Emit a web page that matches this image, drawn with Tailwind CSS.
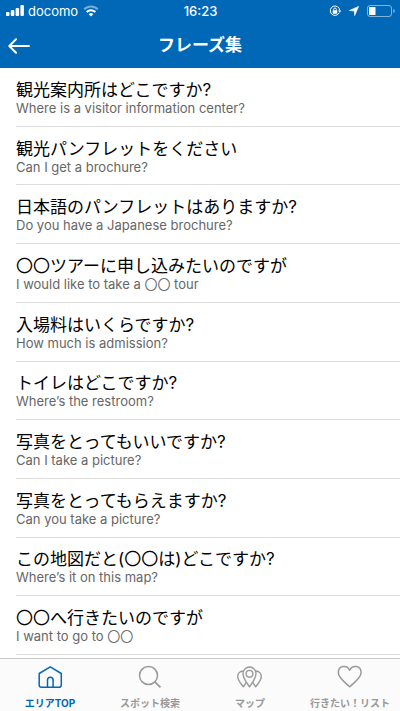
<!DOCTYPE html>
<html lang="ja">
<head>
<meta charset="utf-8">
<meta name="viewport" content="width=device-width, initial-scale=1">
<title>フレーズ集</title>
<script src="https://cdn.jsdelivr.net/npm/@tailwindcss/browser@4"></script>
</head>
<body class="flex h-screen flex-col bg-white font-['Inter','Noto_Sans_CJK_JP',sans-serif] text-black">
  <header class="shrink-0 bg-[#0068b7] text-white">
    <div class="grid h-[22px] grid-cols-3 items-center pr-[5px] pl-[6px] text-[13px] leading-[22px]">
      <div class="flex items-center gap-1">
        <svg class="h-3 w-[18px]" viewBox="0 0 18 12" fill="currentColor" aria-hidden="true">
          <rect x="0" y="7" width="3.500" height="4" rx="1"/><rect x="4.800" y="5" width="3.500" height="6" rx="1"/><rect x="9.600" y="3" width="3.500" height="8" rx="1"/><rect x="14.400" y="0" width="3.500" height="11" rx="1"/>
        </svg>
        <span>docomo</span>
        <svg class="ml-px h-3 w-4" viewBox="0 0 16 12" fill="none" stroke="currentColor" stroke-width="2" aria-hidden="true">
          <path d="M1.200 4.300a9.600 9.600 0 0 1 13.600 0" opacity=".45"/><path d="M3.700 7a6 6 0 0 1 8.600 0"/><path d="M5.700 9.200a3.200 3.200 0 0 1 4.600 0L8 11.500z" fill="currentColor" stroke="none"/>
        </svg>
      </div>
      <time class="text-center font-medium">16:23</time>
      <div class="flex items-center justify-end gap-2">
        <svg class="h-3 w-3" viewBox="0 0 12 12" fill="none" stroke="currentColor" aria-hidden="true">
          <path d="M10.300 7.600A4.700 4.700 0 1 1 10.700 5.500"/><path d="M9 5.500h3.400L10.700 7.500z" fill="currentColor" stroke="none"/><rect x="3.700" y="5.300" width="4.600" height="3.400" rx=".4" fill="currentColor" stroke="none"/><path d="M4.700 5.500V4.300a1.300 1.300 0 0 1 2.600 0v1.200" stroke-width=".9"/>
        </svg>
        <svg class="h-[10px] w-[10px]" viewBox="0 0 10 10" fill="currentColor" stroke="currentColor" stroke-width=".6" stroke-linejoin="round" aria-hidden="true"><path d="M9.600.4 5.700 9.600 5.200 4.900.4 4.500z"/></svg>
        <svg class="h-3 w-[28px]" viewBox="0 0 28 12" fill="none" aria-hidden="true">
          <rect x=".5" y=".5" width="24" height="11" rx="2.500" stroke="#fff" stroke-opacity=".5"/><rect x="2" y="2" width="6.500" height="8" rx=".6" fill="#fff"/><path d="M26.300 4v4c1-.3 1.500-1.100 1.500-2s-.5-1.700-1.500-2z" fill="#fff" fill-opacity=".5"/>
        </svg>
      </div>
    </div>
    <div class="grid h-[46px] grid-cols-[48px_1fr_48px] items-center">
      <button type="button" aria-label="戻る" class="flex h-full items-center pt-px pl-2">
        <svg class="h-4 w-[23px]" viewBox="0 0 23 16" fill="none" stroke="currentColor" stroke-width="2" stroke-linecap="round" stroke-linejoin="round" aria-hidden="true"><path d="M21 8H1.500M8 1.300 1.300 8 8 14.700"/></svg>
      </button>
      <h1 class="text-center text-[17px] leading-6 font-bold">フレーズ集</h1>
    </div>
  </header>

  <main class="min-h-0 flex-1 overflow-hidden pb-[3px] pl-4">
    <ul class="grid h-full auto-rows-fr">
      <li class="flex flex-col justify-center border-b border-[#dcdcdc] pt-1"><p class="text-[17px] leading-5">観光案内所はどこですか?</p><p class="pb-[2px] text-[13px] leading-4 text-[#666]">Where is a visitor information center?</p></li>
      <li class="flex flex-col justify-center border-b border-[#dcdcdc] pt-1"><p class="text-[17px] leading-5">観光パンフレットをください</p><p class="pb-[2px] text-[13px] leading-4 text-[#666]">Can I get a brochure?</p></li>
      <li class="flex flex-col justify-center border-b border-[#dcdcdc] pt-1"><p class="text-[17px] leading-5">日本語のパンフレットはありますか?</p><p class="pb-[2px] text-[13px] leading-4 text-[#666]">Do you have a Japanese brochure?</p></li>
      <li class="flex flex-col justify-center border-b border-[#dcdcdc] pt-1"><p class="text-[17px] leading-5">〇〇ツアーに申し込みたいのですが</p><p class="pb-[2px] text-[13px] leading-4 text-[#666]">I would like to take a 〇〇 tour</p></li>
      <li class="flex flex-col justify-center border-b border-[#dcdcdc] pt-1"><p class="text-[17px] leading-5">入場料はいくらですか?</p><p class="pb-[2px] text-[13px] leading-4 text-[#666]">How much is admission?</p></li>
      <li class="flex flex-col justify-center border-b border-[#dcdcdc] pt-1"><p class="text-[17px] leading-5">トイレはどこですか?</p><p class="pb-[2px] text-[13px] leading-4 text-[#666]">Where’s the restroom?</p></li>
      <li class="flex flex-col justify-center border-b border-[#dcdcdc] pt-1"><p class="text-[17px] leading-5">写真をとってもいいですか?</p><p class="pb-[2px] text-[13px] leading-4 text-[#666]">Can I take a picture?</p></li>
      <li class="flex flex-col justify-center border-b border-[#dcdcdc] pt-1"><p class="text-[17px] leading-5">写真をとってもらえますか?</p><p class="pb-[2px] text-[13px] leading-4 text-[#666]">Can you take a picture?</p></li>
      <li class="flex flex-col justify-center border-b border-[#dcdcdc] pt-1"><p class="text-[17px] leading-5">この地図だと(〇〇は)どこですか?</p><p class="pb-[2px] text-[13px] leading-4 text-[#666]">Where’s it on this map?</p></li>
      <li class="flex flex-col justify-center border-b border-[#dcdcdc] pt-1"><p class="text-[17px] leading-5">〇〇へ行きたいのですが</p><p class="pb-[2px] text-[13px] leading-4 text-[#666]">I want to go to 〇〇</p></li>
    </ul>
  </main>

  <nav class="grid h-[53px] shrink-0 grid-cols-4 border-t border-[#c8c8c8] bg-[#fbfbfb] text-[10px] leading-3 font-bold text-[#999]">
    <a href="#top" aria-current="page" class="flex flex-col items-center gap-2 pt-[6px] text-[#0068b7]">
      <svg class="h-6 w-[26px]" viewBox="0 0 26 24" fill="none" stroke="currentColor" stroke-width="1.500" stroke-linejoin="round" aria-hidden="true"><path d="M4.500 22.300a2.300 2.300 0 0 1-2.300-2.300V8.500L13.300 1.800l11 6.700V20a2.300 2.300 0 0 1-2.300 2.300z"/><path d="M10.500 22.300V15a2.800 2.800 0 0 1 5.600 0v7.300"/></svg>
      <span>エリアTOP</span>
    </a>
    <a href="#spot" class="flex flex-col items-center gap-2 pt-[6px]">
      <svg class="h-6 w-[26px]" viewBox="0 0 26 24" fill="none" stroke="currentColor" stroke-width="1.500" aria-hidden="true"><circle cx="11.500" cy="10.500" r="9"/><path d="m17.800 16.900 5.700 5.400" stroke-width="1.800"/></svg>
      <span>スポット検索</span>
    </a>
    <a href="#map" class="flex flex-col items-center gap-2 pt-[6px]">
      <svg class="h-6 w-[26px]" viewBox="0 0 26 24" fill="none" stroke="currentColor" stroke-width="1.400" stroke-linejoin="round" aria-hidden="true"><path d="M12.500 21.800c-2.500-4-6.500-8-6.500-13.300a6.500 6.500 0 0 1 13 0c0 5.300-4 9.300-6.500 13.300z"/><circle cx="12.500" cy="8.800" r="3.400"/><path d="M6.300 6C2.800 6.200.7 8.700.7 11.600c0 4 3.300 6.900 5.600 10.200 1.100-1.700 2.200-3.100 3.200-4.700M18.700 6c3.500.2 5.600 2.700 5.600 5.600 0 4-3.300 6.900-5.600 10.200-1.100-1.700-2.200-3.100-3.200-4.700"/></svg>
      <span>マップ</span>
    </a>
    <a href="#list" class="flex flex-col items-center gap-2 pt-[6px]">
      <svg class="h-6 w-[26px]" viewBox="0 0 26 24" fill="none" stroke="currentColor" stroke-width="1.500" stroke-linejoin="round" aria-hidden="true"><path d="M12.700 21.800C8.700 17.800 1.300 13.200 1.300 7.500c0-6.800 8.700-8.300 11.400-2.300 2.700-6 11.400-4.500 11.400 2.300 0 5.700-7.400 10.300-11.400 14.300z"/></svg>
      <span>行きたい！リスト</span>
    </a>
  </nav>
</body>
</html>
